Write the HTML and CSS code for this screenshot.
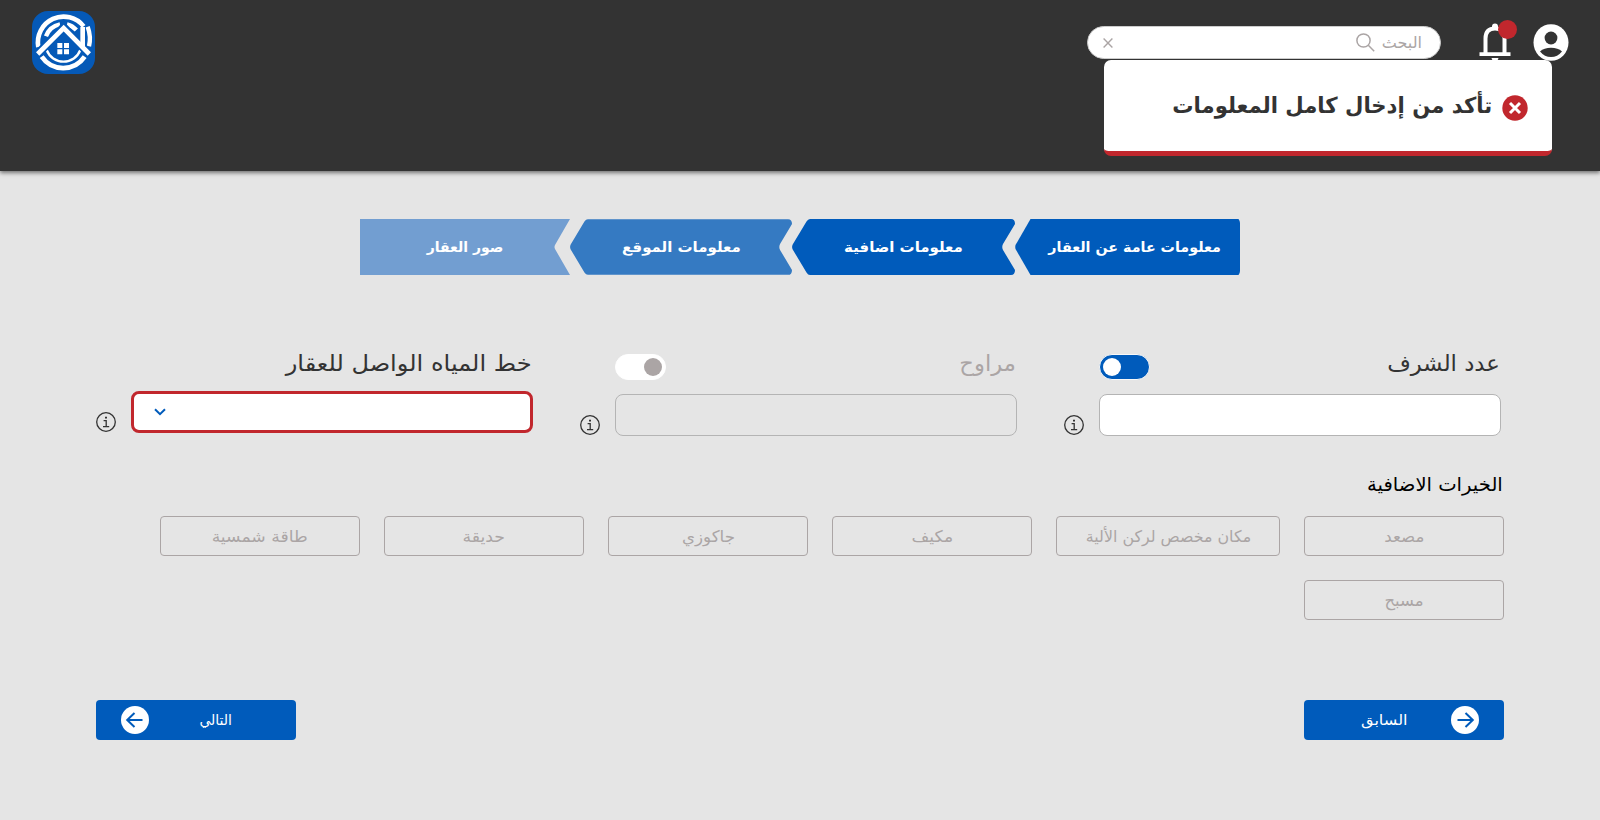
FILE: index.html
```html
<!DOCTYPE html>
<html lang="ar" dir="rtl">
<head>
<meta charset="utf-8">
<title>معلومات اضافية</title>
<link rel="stylesheet" href="styles.css">
</head>
<body>
<header class="topbar">
  <div class="tools">
    <svg class="avatar" viewBox="0 0 36 37"><ellipse cx="18" cy="18.5" rx="17.5" ry="18.3" fill="#fff"/><circle cx="18" cy="14" r="6.4" fill="#333"/><path d="M7 27.5Q11 23.8 18 23.8T29 27.5Q24.500 33 18 33T7 27.500Z" fill="#333"/></svg>
    <div class="bell">
      <svg viewBox="0 0 32 40"><path d="M6.500 30V15.500Q6.500 5.500 16 5.500T25.500 15.500V30" fill="none" stroke="#fff" stroke-width="4"/><path d="M13 6V3.500Q13 .5 16 .5T19 3.500V6ZM.5 29.200H31.500V33H.5ZM12.500 35H19.500Q19 38 16 38T12.500 35Z" fill="#fff"/></svg>
      <span class="dot"></span>
    </div>
    <div class="search">
      <span class="fit search-text">البحث</span>
      <svg class="lens" viewBox="0 0 19 19"><circle cx="7.500" cy="7.500" r="6.600"/><path d="M12.300 12.300L18.200 18.200"/></svg>
      <svg class="clear" viewBox="0 0 10 10"><path d="M.6 .6L9.400 9.400M9.400 .6L.6 9.400"/></svg>
    </div>
  </div>
  <svg class="logo" viewBox="0 0 189 189">
    <rect width="189" height="189" rx="48" fill="#0559b7"/>
    <g fill="none" stroke="#fff">
      <path d="M19 108A77 77 0 0 1 155 46" stroke-width="14"/>
      <path d="M29 137A78 78 0 0 0 158 137" stroke-width="14"/>
      <path d="M167 47Q178 77 171 106" stroke-width="13"/>
      <path d="M44 117A54 54 0 0 0 145 117" stroke-width="7"/>
      <path d="M42 76A56 56 0 0 1 84 40" stroke-width="13"/>
      <path d="M105 40A56 56 0 0 1 133 57" stroke-width="13"/>
      <path d="M20 126L95 49L169 126" stroke="#0559b7" stroke-width="25"/>
      <path d="M152 48V108" stroke-width="14"/>
      <path d="M17 129L95 51L172 129" stroke-width="14"/>
    </g>
    <path d="M76 96h15v15H76zM96 96h15v15H96zM76 115h15v15H76zM96 115h15v15H96z" fill="#fff"/>
  </svg>
  <div class="toast">
    <svg class="toast-icon" viewBox="0 0 26 26"><circle cx="13" cy="13" r="12.700" fill="#c1272d"/><path d="M8 8L18 18M18 8L8 18" stroke="#fff" stroke-width="3"/></svg>
    <span class="fit toast-text">تأكد من إدخال كامل المعلومات</span>
  </div>
</header>

<main>
  <ol class="steps">
    <li class="step first"><svg viewBox="0 0 225 56"><path d="M15.500 0H223.500Q225 2 225 4V52Q225 54 223.500 56H15.500L.5 30Q0 28 .5 26Z"/></svg><span class="fit s1">معلومات عامة عن العقار</span></li>
    <li class="step second"><svg viewBox="0 0 223 56"><path d="M18 0H219Q223 0 223 5L211 25Q209.500 28 211 31L223 51Q223 56 219 56H18Q16 56 14.500 53.500L.7 30.500Q-.5 28 .7 25.500L14.500 2.500Q16 0 18 0Z"/></svg><span class="fit s2">معلومات اضافية</span></li>
    <li class="step third"><svg viewBox="0 0 223 56"><path d="M18 0H219Q223 0 223 5L211 25Q209.500 28 211 31L223 51Q223 56 219 56H18Q16 56 14.500 53.500L.7 30.500Q-.5 28 .7 25.500L14.500 2.500Q16 0 18 0Z"/></svg><span class="fit s3">معلومات الموقع</span></li>
    <li class="step fourth"><svg viewBox="0 0 210 56"><path d="M0 0H210L195 26Q194 28 195 30L210 56H0Z"/></svg><span class="fit s4">صور العقار</span></li>
  </ol>

  <section class="fields">
    <div class="field">
      <div class="field-head"><span class="fit label l1">عدد الشرف</span><span class="toggle on"><i></i></span></div>
      <div class="field-row"><div class="box"></div><svg class="info" viewBox="0 0 20 20"><circle cx="10" cy="10" r="9.300"/><path d="M7.600 8.700H10.200V14.600M7 14.600H13.200"/><path d="M9 4.700H11V6.500H9Z" class="fill"/></svg></div>
    </div>
    <div class="field">
      <div class="field-head"><span class="fit label muted l2">مراوح</span><span class="toggle off"><i></i></span></div>
      <div class="field-row"><div class="box disabled"></div><svg class="info" viewBox="0 0 20 20"><circle cx="10" cy="10" r="9.300"/><path d="M7.600 8.700H10.200V14.600M7 14.600H13.200"/><path d="M9 4.700H11V6.500H9Z" class="fill"/></svg></div>
    </div>
    <div class="field last">
      <div class="field-head"><span class="fit label l3">خط المياه الواصل للعقار</span></div>
      <div class="field-row"><div class="box error"><svg class="chevron" viewBox="0 0 12 8"><path d="M1 1.200L6 6.200L11 1.200"/></svg></div><svg class="info" viewBox="0 0 20 20"><circle cx="10" cy="10" r="9.300"/><path d="M7.600 8.700H10.200V14.600M7 14.600H13.200"/><path d="M9 4.700H11V6.500H9Z" class="fill"/></svg></div>
    </div>
  </section>

  <h2 class="extras-title"><span class="fit ht">الخيرات الاضافية</span></h2>
  <div class="chips">
    <span class="chip"><span class="fit c1">مصعد</span></span>
    <span class="chip wide"><span class="fit c2">مكان مخصص لركن الألية</span></span>
    <span class="chip"><span class="fit c3">مكيف</span></span>
    <span class="chip"><span class="fit c4">جاكوزي</span></span>
    <span class="chip"><span class="fit c5">حديقة</span></span>
    <span class="chip"><span class="fit c6">طاقة شمسية</span></span>
    <span class="chip"><span class="fit c7">مسبح</span></span>
  </div>

  <div class="actions">
    <button class="btn prev"><svg viewBox="0 0 28 28"><circle cx="14" cy="14" r="14"/><path d="M6.500 14H21.500M14.500 7L21.800 14L14.500 21"/></svg><span class="fit b1">السابق</span></button>
    <button class="btn next"><span class="fit b2">التالي</span><svg viewBox="0 0 28 28"><circle cx="14" cy="14" r="14"/><path d="M21.500 14H6.500M13.500 7L6.200 14L13.500 21"/></svg></button>
  </div>
</main>
</body>
</html>
```
FILE: styles.css
```css
* { box-sizing: border-box; }
body { margin: 0; width: 1600px; height: 820px; overflow: hidden; background: #e5e5e5; color: #333; font-family: "DejaVu Sans", sans-serif; }
svg { display: block; flex: none; }

/* horizontal fitting of labels to their design widths */
.fit { display: inline-block; white-space: nowrap; flex: none; transform: scaleX(var(--fit, 1)); }
.toast-text, .label, .ht { transform-origin: right; }
.toast-text { --fit: .963; }
.s1 { --fit: 1.02; }
.s2, .s3 { --fit: 1.07; }
.l1 { --fit: 1.035; }
.l2 { --fit: 1.03; }
.l3 { --fit: 1.095; }
.ht { --fit: 1.03; }
.c1, .c4 { --fit: 1.04; }
.c2 { --fit: .99; }
.c3, .c6 { --fit: 1.075; }
.c5 { --fit: 1.08; }
.c7 { --fit: 1.03; }
.b1 { --fit: 1.15; }

.topbar { position: relative; display: flex; justify-content: space-between; height: 171px; padding: 11px 31px 0 32px; background: #333; box-shadow: 0 2px 4px rgba(0,0,0,.5); }
.logo { width: 63px; height: 63px; }
.tools { display: flex; align-items: flex-start; }
.avatar { width: 36px; height: 37px; margin-top: 13px; }
.bell { position: relative; width: 32px; margin: 12px 22px 0 38px; }
.dot { position: absolute; left: 19px; top: -3px; width: 19px; height: 19px; border-radius: 50%; background: #c1272d; }
.search { display: flex; align-items: center; width: 354px; height: 33px; margin-top: 15px; padding: 0 18px 0 15px; border: 1px solid #ccc; border-radius: 17px; background: #fff; color: #aba5a5; }
.search-text { font-size: 16px; }
.lens { width: 19px; height: 19px; margin-right: 7px; fill: none; stroke: #aba5a5; stroke-width: 1.5; }
.clear { width: 10px; height: 10px; margin-right: auto; stroke: #aba5a5; stroke-width: 1.4; }
.toast { position: absolute; left: 1104px; top: 60px; width: 448px; height: 96px; display: flex; align-items: flex-start; padding: 33px 24px 0 0; border-radius: 7px; border-bottom: 5px solid #c1272d; background: #fff; }
.toast-icon { width: 26px; height: 26px; margin: 2px 0 0 10px; }
.toast-text { font-size: 22px; font-weight: 700; line-height: 26px; }

.steps { display: flex; width: 880px; margin: 48px auto 0; padding: 0; list-style: none; }
.step { position: relative; display: flex; align-items: center; justify-content: center; height: 56px; color: #fff; font-size: 14px; font-weight: 700; }
.step svg { position: absolute; inset: 0; width: 100%; height: 100%; }
.step .fit { position: relative; }
.first { width: 225px; padding-left: 14px; fill: #005bbb; }
.second { width: 223px; fill: #005bbb; }
.third { width: 222px; fill: #357ac2; }
.fourth { width: 210px; fill: #729ed1; }

.fields { display: grid; grid-template-columns: repeat(3, 437px); column-gap: 47px; padding: 72px 99px 0 0; }
.field-head { display: flex; align-items: flex-start; justify-content: space-between; height: 47px; padding: 2px 1px 0 35px; }
.label { font-size: 22px; line-height: 30px; }
.muted { color: #aba5a5; }
.toggle { display: flex; align-items: center; width: 51px; height: 26px; margin-top: 5px; padding: 3px; border-radius: 13px; border: 1px solid #f8f8f8; }
.toggle i { width: 18px; height: 18px; border-radius: 50%; background: #fff; }
.on { background: #005bbb; justify-content: flex-end; }
.off { background: #fff; border-color: #fff; }
.off i { background: #aba5a5; }
.field-row { display: flex; align-items: flex-end; justify-content: space-between; }
.box { width: 402px; height: 42px; border: 1.500px solid #b4b4b4; border-radius: 8px; background: #fff; }
.disabled { background: transparent; }
.info { width: 20px; height: 20px; margin-bottom: 1px; fill: none; stroke: #333; stroke-width: 1.3; }
.info .fill { fill: #333; stroke: none; }
.last .field-head { height: 44px; }
.error { display: flex; align-items: center; justify-content: flex-end; border: 3px solid #c1272d; padding-left: 20px; }
.chevron { width: 12px; height: 8px; fill: none; stroke: #005bbb; stroke-width: 2; }

.extras-title { margin: 33px 97px 0 0; height: 47px; font-size: 19px; line-height: 30px; font-weight: 400; color: #000; }
.chips { display: flex; flex-wrap: wrap; gap: 24px; padding: 0 96px; }
.chip { display: flex; align-items: center; justify-content: center; width: 200px; height: 40px; border: 1px solid #aba5a5; border-radius: 4px; color: #aba5a5; font-size: 16px; }
.wide { width: 224px; }
.actions { display: flex; justify-content: space-between; padding: 80px 96px 0; }
.btn { display: flex; align-items: center; justify-content: space-between; width: 200px; height: 40px; border: 0; border-radius: 4px; background: #005bbb; color: #fff; font-family: inherit; font-size: 14px; }
.btn svg { width: 28px; height: 28px; fill: none; stroke: #005bbb; stroke-width: 2; }
.btn circle { fill: #fff; stroke: none; }
.prev { padding: 0 25px 0 60px; }
.next { padding: 0 64px 0 25px; }
```
